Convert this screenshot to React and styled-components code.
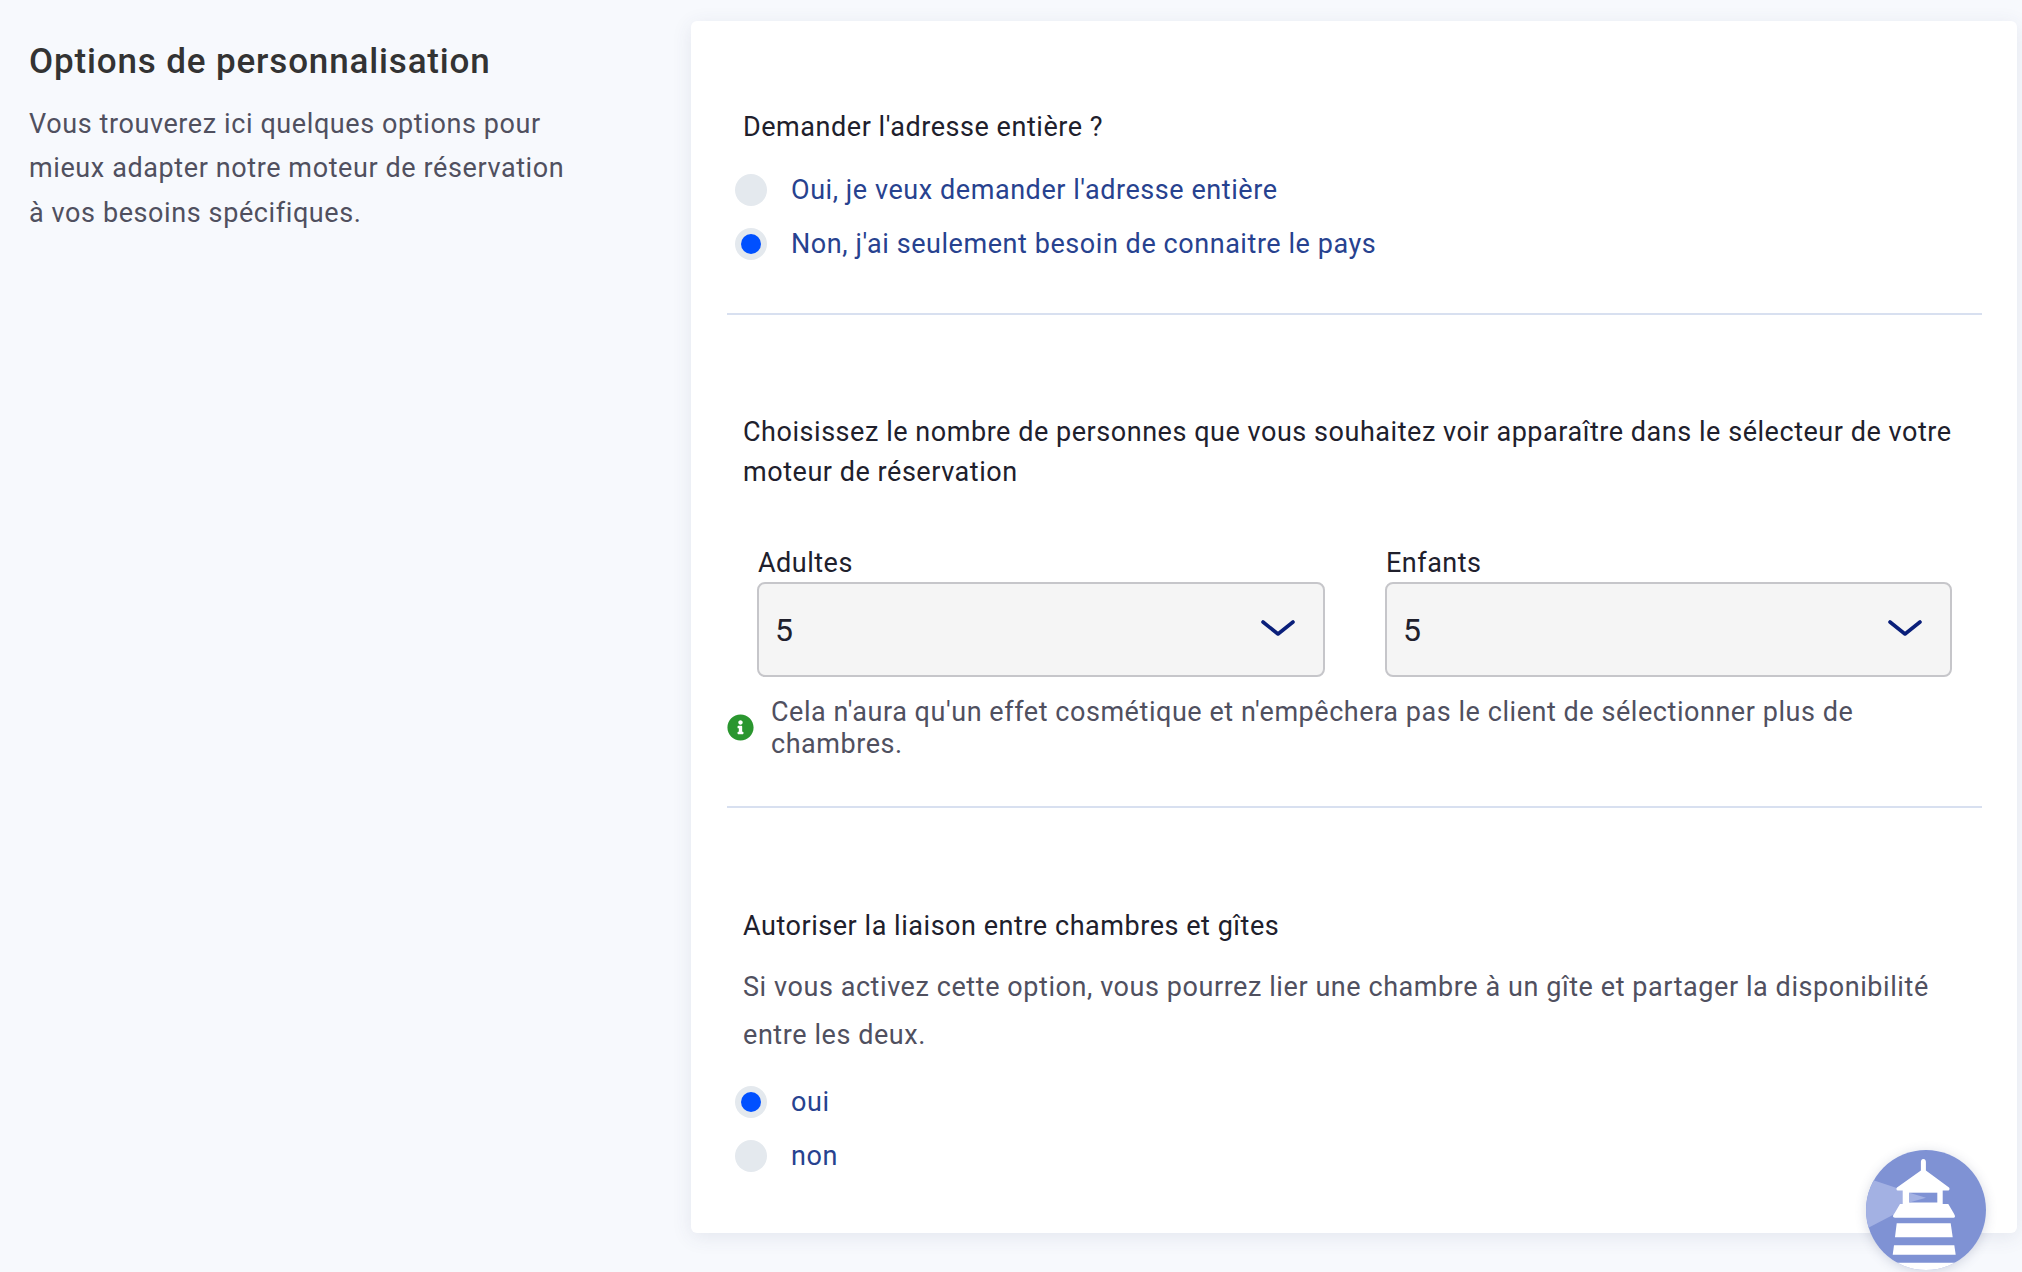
import React from "react";
import styled, { createGlobalStyle } from "styled-components";
import { FaInfoCircle } from "react-icons/fa";

const Global = createGlobalStyle`
  html, body { margin: 0; padding: 0; background: #f7f9fd; }
  body { font-family: Roboto, "Liberation Sans", sans-serif; -webkit-font-smoothing: antialiased; }
  * { box-sizing: border-box; }
`;

const Page = styled.div`
  position: relative;
  width: 2022px;
  height: 1272px;
  overflow: hidden;
  display: flex;
  align-items: flex-start;
  background: #f7f9fd;
`;

const Sidebar = styled.aside`
  width: 691px;
  flex: none;
  padding: 38px 0 0 29px;
`;

const Title = styled.h2`
  margin: 0;
  font-size: 35px;
  line-height: 48px;
  font-weight: 500;
  letter-spacing: 0.85px;
  color: #333333;
`;

const Lead = styled.p`
  margin: 16px 0 0;
  width: 545px;
  font-size: 27px;
  line-height: 44.4px;
  letter-spacing: 0.6px;
  color: #50505f;
`;

const Card = styled.main`
  width: 1326px;
  height: 1212px;
  margin-top: 21px;
  padding: 0 35px 0 36px;
  background: #fff;
  border-radius: 6px;
  box-shadow: 0 4px 20px rgba(60, 70, 110, 0.1);
`;

const Section = styled.section`
  height: ${(p) => p.$height}px;
  padding-top: ${(p) => p.$top}px;
  border-bottom: ${(p) => (p.$last ? "none" : "2px solid #d8e0f0")};
`;

const Question = styled.div`
  padding-left: 16px;
  font-size: 27px;
  line-height: 40px;
  letter-spacing: 0.54px;
  color: #20202c;
`;

const RadioList = styled.div`
  display: flex;
  flex-direction: column;
  gap: 22px;
  margin-top: ${(p) => p.$top}px;
  padding-left: 8px;
`;

const RadioRow = styled.label`
  display: flex;
  align-items: center;
  gap: 24px;
  height: 32px;
  font-size: 27px;
  letter-spacing: 0.56px;
  color: #27428f;
`;

const RadioDot = styled.span`
  flex: none;
  width: 32px;
  height: 32px;
  border-radius: 50%;
  background: #e4e9ee;
  display: flex;
  align-items: center;
  justify-content: center;
  &::after {
    content: "";
    width: 20px;
    height: 20px;
    border-radius: 50%;
    background: ${(p) => (p.$checked ? "#0050ff" : "transparent")};
  }
`;

const SelectGrid = styled.div`
  display: grid;
  grid-template-columns: 568px 567px;
  gap: 60px;
  margin-top: 52px;
  padding-left: 30px;
`;

const FieldLabel = styled.div`
  font-size: 27px;
  line-height: 38px;
  letter-spacing: 0.5px;
  color: #20202c;
  padding-left: 1px;
`;

const SelectBox = styled.div`
  height: 95px;
  padding: 0 28px 0 16px;
  display: flex;
  align-items: center;
  justify-content: space-between;
  background: #f5f5f5;
  border: 2px solid #c6c6ca;
  border-radius: 8px;
  font-size: 32px;
  color: #20202c;
  svg { margin-bottom: 3px; }
`;

const Hint = styled.div`
  display: flex;
  align-items: center;
  gap: 17px;
  margin-top: 19px;
  padding-right: 100px;
  font-size: 27px;
  line-height: 32px;
  letter-spacing: 0.55px;
  color: #50505f;
  svg { flex: none; width: 27px; height: 27px; margin-top: -2px; color: #2a962f; }
`;

const Description = styled.p`
  margin: 17px 0 0;
  padding-left: 16px;
  font-size: 27px;
  line-height: 48px;
  letter-spacing: 0.57px;
  color: #50505f;
`;

const Badge = styled.div`
  position: absolute;
  left: 1866px;
  top: 1150px;
  width: 120px;
  height: 120px;
  border-radius: 50%;
  box-shadow: 0 2px 12px rgba(60, 70, 110, 0.2);
`;

const Chevron = () => (
  <svg width="34" height="18" viewBox="0 0 34 18" fill="none">
    <path d="M2 3l15 12L32 3" stroke="#0a1f7a" strokeWidth="3.6" strokeLinecap="round" strokeLinejoin="round" />
  </svg>
);

const Lighthouse = () => (
  <svg width="120" height="120" viewBox="0 0 120 120">
    <defs>
      <clipPath id="disc"><circle cx="60" cy="60" r="60" /></clipPath>
    </defs>
    <g clipPath="url(#disc)">
      <rect width="120" height="120" fill="#7f92d4" />
      <path d="M-2 27 L60 47.7 L-2 80z" fill="#a3b1e3" />
      <path d="M57.300 9c2 0 2.600 1.500 2.600 3v8.500L83 37.500c1 .8.600 3-.8 3H76.700V54h5.600l4.700 8c1 2 2 3 2 4.400 0 .9-.8 1.300-2 1.300H29c-1.300 0-2-.6-2-1.400 0-1.400 1.400-2.600 2.300-4.300l4.700-8h2.700V40.500h-4.900c-1.500 0-1.800-2.200-.8-3l23.900-17V12c0-1.500.6-3 2.400-3z" fill="#fff" />
      <rect x="43.300" y="42.700" width="28" height="9.800" fill="#7f92d4" />
      <path d="M43.300 42.700l16.700 5-16.700 4.800z" fill="#a3b1e3" />
      <path d="M30.700 73.300h54l2 14H29z" fill="#fff" />
      <path d="M28 95.300h60.300l1.400 9.400H26.700z" fill="#fff" />
      <path d="M20 112.700h80V125H20z" fill="#fff" />
    </g>
  </svg>
);

const Radio = ({ checked, children }) => (
  <RadioRow>
    <RadioDot $checked={checked} />
    {children}
  </RadioRow>
);

const Select = ({ label, value }) => (
  <div>
    <FieldLabel>{label}</FieldLabel>
    <SelectBox>
      {value}
      <Chevron />
    </SelectBox>
  </div>
);

export default function App() {
  return (
    <Page>
      <Global />
      <Sidebar>
        <Title>Options de personnalisation</Title>
        <Lead>
          Vous trouverez ici quelques options pour mieux adapter notre moteur de réservation à vos besoins spécifiques.
        </Lead>
      </Sidebar>
      <Card>
        <Section $height={294} $top={86}>
          <Question>Demander l'adresse entière ?</Question>
          <RadioList $top={27}>
            <Radio>Oui, je veux demander l'adresse entière</Radio>
            <Radio checked>Non, j'ai seulement besoin de connaitre le pays</Radio>
          </RadioList>
        </Section>
        <Section $height={493} $top={97}>
          <Question>
            Choisissez le nombre de personnes que vous souhaitez voir apparaître dans le sélecteur de votre moteur de réservation
          </Question>
          <SelectGrid>
            <Select label="Adultes" value="5" />
            <Select label="Enfants" value="5" />
          </SelectGrid>
          <Hint>
            <FaInfoCircle />
            <span>Cela n'aura qu'un effet cosmétique et n'empêchera pas le client de sélectionner plus de chambres.</span>
          </Hint>
        </Section>
        <Section $last $top={98}>
          <Question>Autoriser la liaison entre chambres et gîtes</Question>
          <Description>
            Si vous activez cette option, vous pourrez lier une chambre à un gîte et partager la disponibilité entre les deux.
          </Description>
          <RadioList $top={27}>
            <Radio checked>oui</Radio>
            <Radio>non</Radio>
          </RadioList>
        </Section>
      </Card>
      <Badge>
        <Lighthouse />
      </Badge>
    </Page>
  );
}
